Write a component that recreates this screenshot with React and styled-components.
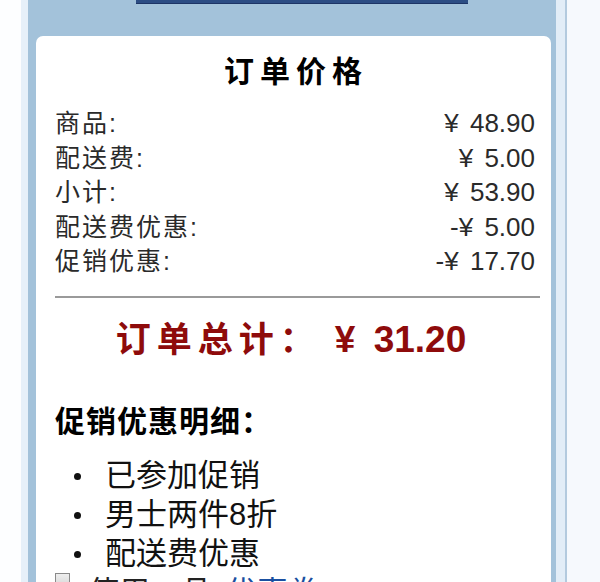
import React from 'react';
import styled, { createGlobalStyle } from 'styled-components';

const GlobalStyle = createGlobalStyle`
  html, body {
    margin: 0;
    padding: 0;
    background: #ffffff;
  }
  body {
    font-family: "Liberation Sans", "Noto Sans CJK SC", sans-serif;
  }
`;

const Page = styled.div`
  display: flex;
  height: 582px;
  overflow: hidden;
`;

const Gutter = styled.div`
  width: 21px;
  background: #fdfeff;
`;

const Strip = styled.div`
  width: ${p => p.w}px;
  background: ${p => p.color};
`;

const Fill = styled.div`
  flex: 1;
  background: #f6f9fd;
`;

const Panel = styled.div`
  width: 528px;
  background: #a3c2da;
  padding: 0 5px 0 8px;
  box-sizing: border-box;
  display: flex;
  flex-direction: column;
`;

const TopButton = styled.div`
  margin-left: 100px;
  width: 332px;
  height: 3px;
  background: #2c4d84;
  border-bottom: 1px solid #1d3566;
  margin-bottom: 32px;
`;

const Card = styled.div`
  flex: 1;
  background: #ffffff;
  border-radius: 7px 7px 0 0;
  padding: 16px 14px 0 19px;
  color: #222;
  overflow: hidden;
`;

const Title = styled.h2`
  margin: 0;
  text-align: center;
  font-size: 30px;
  line-height: 40px;
  font-weight: 700;
  letter-spacing: 6px;
  color: #000;
`;

const Rows = styled.div`
  margin-top: 14px;
`;

const Row = styled.div`
  display: flex;
  justify-content: space-between;
  font-size: 25px;
  line-height: 34.5px;
  color: #2a2a2a;
`;

const Label = styled.span`
  letter-spacing: 2px;
`;

const Value = styled.span`
  padding-right: 2px;
  font-size: 26px;
  word-spacing: 4px;
`;

const Divider = styled.hr`
  margin: 17px 0 0;
  border: 0;
  border-top: 2px solid #9a9a9a;
  width: 485px;
`;

const Total = styled.div`
  margin-top: 20px;
  text-align: center;
  font-size: 35px;
  line-height: 44px;
  font-weight: 700;
  color: #8e0b0b;
  padding-right: 10px;
`;

const TotalLabel = styled.span`
  letter-spacing: 6px;
  margin-right: 14px;
`;

const Amount = styled.span`
  font-size: 37px;
  word-spacing: 8px;
`;

const SubHeading = styled.h3`
  margin: 42px 0 0;
  font-size: 30px;
  line-height: 36px;
  font-weight: 700;
  letter-spacing: 1px;
  color: #000;
`;

const List = styled.ul`
  list-style: none;
  margin: 16px 0 0;
  padding: 0 0 0 19px;
`;

const Item = styled.li`
  display: flex;
  align-items: center;
  font-size: 31px;
  line-height: 39px;
  color: #111;
`;

const Bullet = styled.span`
  width: 7px;
  height: 7px;
  border-radius: 50%;
  background: #111;
  margin: 2px 24px 0 0;
`;

const CheckRow = styled.div`
  display: flex;
  align-items: flex-start;
  gap: 18px;
  font-size: 31px;
  line-height: 39px;
`;

const Box = styled.span`
  width: 13px;
  height: 13px;
  border: 1px solid #8a8a8a;
  background: linear-gradient(#eee, #d6d6d6);
`;

const LinkText = styled.span`
  color: #1a4fa0;
  margin-left: 14px;
`;

const rows = [
  ['商品:', '¥ 48.90'],
  ['配送费:', '¥ 5.00'],
  ['小计:', '¥ 53.90'],
  ['配送费优惠:', '-¥ 5.00'],
  ['促销优惠:', '-¥ 17.70'],
];

const promos = ['已参加促销', '男士两件8折', '配送费优惠'];

export default function App() {
  return (
    <>
      <GlobalStyle />
      <Page>
        <Gutter />
        <Strip w={7} color="#e6f0f9" />
        <Panel>
          <TopButton />
          <Card>
            <Title>订单价格</Title>
            <Rows>
              {rows.map(([label, value]) => (
                <Row key={label}>
                  <Label>{label}</Label>
                  <Value>{value}</Value>
                </Row>
              ))}
            </Rows>
            <Divider />
            <Total>
              <TotalLabel>订单总计：</TotalLabel>
              <Amount>¥ 31.20</Amount>
            </Total>
            <SubHeading>促销优惠明细：</SubHeading>
            <List>
              {promos.map(p => (
                <Item key={p}>
                  <Bullet />
                  {p}
                </Item>
              ))}
            </List>
            <CheckRow>
              <Box />
              <span>
                使用一品<LinkText>优惠券</LinkText>
              </span>
            </CheckRow>
          </Card>
        </Panel>
        <Strip w={9} color="#e2edf7" />
        <Strip w={2} color="#b3cade" />
        <Fill />
      </Page>
    </>
  );
}
